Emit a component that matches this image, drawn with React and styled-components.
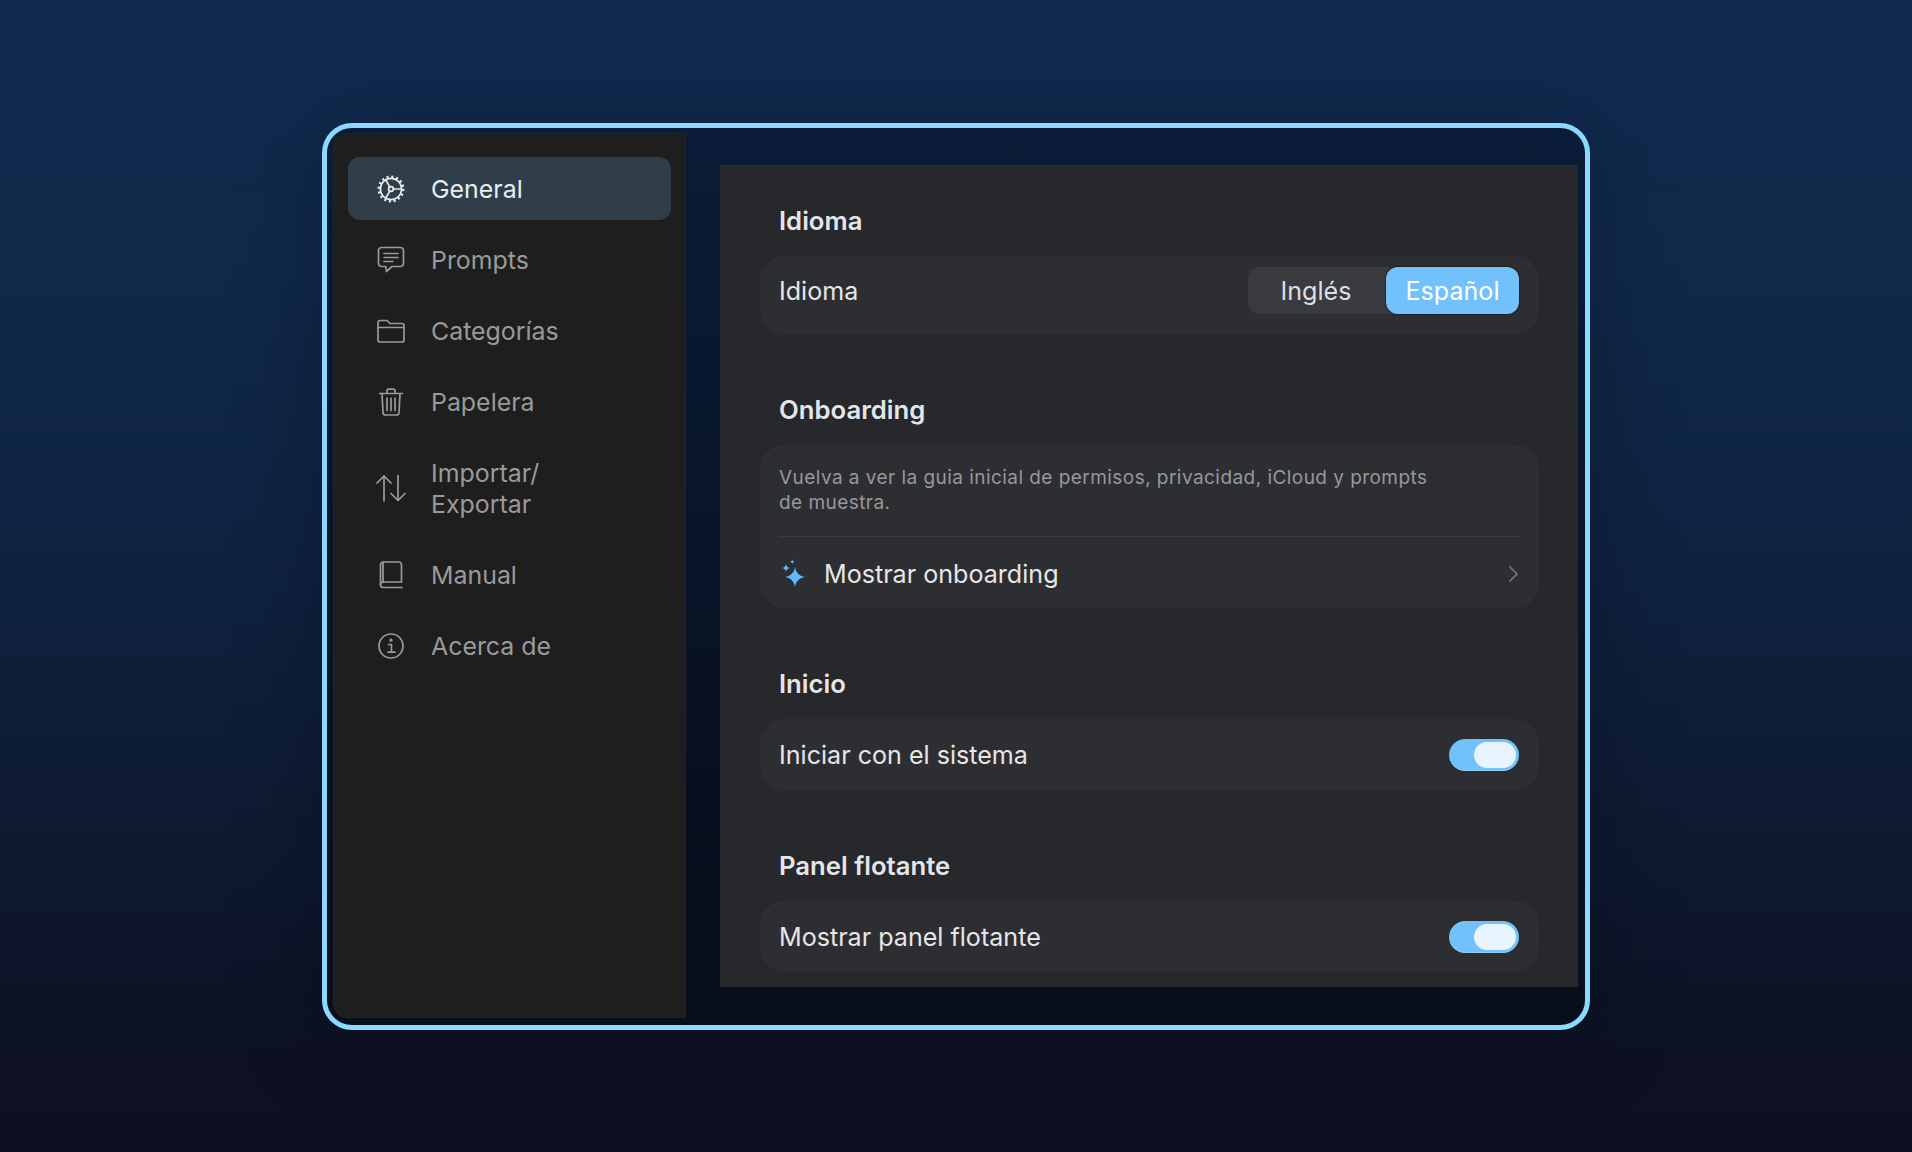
import React from "react";
import styled, { createGlobalStyle } from "styled-components";

const Global = createGlobalStyle`
  html, body { margin: 0; padding: 0; }
  body { font-family: Inter, "Noto Sans", sans-serif; -webkit-font-smoothing: antialiased; }
`;

const Page = styled.div`
  box-sizing: border-box;
  height: 1152px;
  padding-top: 123px;
  display: flex;
  justify-content: center;
  align-items: flex-start;
  overflow: hidden;
  background: linear-gradient(180deg, #102a50 0%, #11294a 22%, #0f2341 48%, #0e1b32 70%, #0d1225 90%, #0d1020 100%);
`;

const Frame = styled.div`
  box-sizing: border-box;
  width: 1268px;
  height: 907px;
  border: 5px solid #8cd9ff;
  border-radius: 30px;
  padding: 5px 7px 7px 6px;
  display: flex;
  background: linear-gradient(180deg, #0a1c37 0%, #09162b 40%, #070e1c 85%, #080e1c 100%);
  box-shadow: 0 10px 90px rgba(4, 8, 18, 0.28);
`;

const Sidebar = styled.nav`
  box-sizing: border-box;
  width: 353px;
  flex: none;
  padding: 24px 15px;
  background: #1e1e1e;
  border-radius: 14px 0 0 14px;
  box-shadow: inset 0 0 0 1px rgba(255, 255, 255, 0.025);
  display: flex;
  flex-direction: column;
  gap: 8px;
`;

const NavItem = styled.div`
  display: flex;
  align-items: center;
  gap: 26px;
  padding: 17px 15px 15px 29px;
  border-radius: 12px;
  font-size: 24.9px;
  line-height: 31px;
  font-weight: 400;
  color: ${(p) => (p.$active ? "#e8edf0" : "#999a9a")};
  background: ${(p) => (p.$active ? "#2f3e48" : "transparent")};
`;

const NavIcon = styled.svg`
  width: 28px;
  height: 28px;
  flex: none;
  margin-bottom: 2px;
  fill: none;
  stroke: currentColor;
  stroke-width: 1.7;
  stroke-linecap: round;
  stroke-linejoin: round;
`;

const WideNavIcon = styled(NavIcon)`
  width: 30px;
  margin: 0 -1px 2px;
`;

const NavLabel = styled.span`
  width: 150px;
`;

const Main = styled.main`
  box-sizing: border-box;
  flex: 1;
  margin: 32px 0 31px 34px;
  padding: 40.5px 39.5px 0;
  background: #26282c;
  box-shadow: inset 0 0 0 1px rgba(255, 255, 255, 0.012);
  display: flex;
  flex-direction: column;
  gap: 61px;
`;

const Section = styled.section`
  display: flex;
  flex-direction: column;
  gap: 20px;
`;

const Title = styled.h2`
  margin: 0;
  padding-left: 19.5px;
  font-size: 25.7px;
  line-height: 30px;
  font-weight: 600;
  color: #e4e5e6;
`;

const Card = styled.div`
  background: #2d2e32;
  border-radius: 24px;
  padding: 0 19.5px;
`;

const Row = styled.div`
  box-sizing: border-box;
  display: flex;
  align-items: center;
  justify-content: space-between;
  height: ${(p) => p.$h}px;
  padding: ${(p) => p.$pt || 0}px 0 ${(p) => p.$pb || 0}px;
  font-size: 25.1px;
  color: #e6e6e7;
`;

const Segments = styled.div`
  display: flex;
  width: 271px;
  height: 47px;
  border-radius: 12px;
  background: #3a3b3f;
`;

const Segment = styled.div`
  box-sizing: border-box;
  display: flex;
  align-items: center;
  justify-content: center;
  width: ${(p) => (p.$on ? 133 : 138)}px;
  padding-right: ${(p) => (p.$on ? 0 : 2)}px;
  border-radius: 12px;
  font-size: 25.1px;
  color: ${(p) => (p.$on ? "#ffffff" : "#dedee0")};
  background: ${(p) => (p.$on ? "#72c1fa" : "transparent")};
  box-shadow: ${(p) => (p.$on ? "0 0 1px 0.5px rgba(0, 0, 0, 0.3)" : "none")};
`;

const Description = styled.div`
  padding: 20px 0;
  border-bottom: 1.5px solid #3a3b3f;
`;

const DescriptionText = styled.p`
  margin: 0;
  max-width: 660px;
  font-size: 19px;
  line-height: 25.5px;
  letter-spacing: 0.45px;
  color: #97989a;
`;

const RowLead = styled.div`
  display: flex;
  align-items: center;
  gap: 19px;
`;

const Toggle = styled.div`
  box-sizing: border-box;
  display: flex;
  justify-content: flex-end;
  align-items: center;
  width: 70px;
  height: 32px;
  padding-right: 3px;
  border-radius: 16px;
  background: #72c1fa;
  box-shadow: inset 0 -1px 0 rgba(255, 255, 255, 0.25), 0 0 1px rgba(0, 0, 0, 0.6);
`;

const Knob = styled.div`
  width: 42px;
  height: 26px;
  border-radius: 13px;
  background: #e8f5fe;
`;

const Gear = () => (
  <NavIcon viewBox="0 0 28 28">
    <circle cx="14" cy="14" r="10.6" />
    <circle cx="14" cy="14" r="12.2" strokeWidth="2.6" strokeDasharray="2 2.79" strokeLinecap="butt" />
    <circle cx="14" cy="14" r="2.4" />
    <path d="M16.4 14H24.4M12.8 11.9 8.8 5M12.8 16.1 8.8 23" />
  </NavIcon>
);
const Bubble = () => (
  <NavIcon viewBox="0 0 28 28">
    <path d="M4.5 1.5H23.5A3 3 0 0 1 26.5 4.5V17.5A3 3 0 0 1 23.5 20.5H15L9.5 25.5L8.8 20.5H4.5A3 3 0 0 1 1.5 17.5V4.5A3 3 0 0 1 4.5 1.5Z" />
    <path d="M7 7.5H21M7 11.5H21M7 15.5H16" />
  </NavIcon>
);
const Folder = () => (
  <NavIcon viewBox="0 0 28 28">
    <path d="M1 5.5A2 2 0 0 1 3 3.5H10L13 6.5H25A2 2 0 0 1 27 8.5V23A2 2 0 0 1 25 25H3A2 2 0 0 1 1 23Z" />
    <path d="M1 10.5H27" />
  </NavIcon>
);
const Trash = () => (
  <NavIcon viewBox="0 0 28 28">
    <path d="M2.5 5.5H25.5M10 5.5V3A1.8 1.8 0 0 1 11.8 1.2H16.2A1.8 1.8 0 0 1 18 3V5.5" />
    <path d="M5 5.5L6 24.5A2.5 2.5 0 0 0 8.5 27H19.5A2.5 2.5 0 0 0 22 24.5L23 5.5" />
    <path d="M10 10V22.5M14 10V22.5M18 10V22.5" />
  </NavIcon>
);
const Arrows = () => (
  <WideNavIcon viewBox="0 0 30 28">
    <path d="M8 27V2M1 9L8 2L15 9M22 1.5V26.5M15 19.5L22 26.5L29 19.5" />
  </WideNavIcon>
);
const Book = () => (
  <NavIcon viewBox="0 0 28 28">
    <path d="M6 21.5V1H21.5A3 3 0 0 1 24.5 4V21H6A2.8 2.8 0 0 0 3.5 23.5A2.8 2.8 0 0 0 6 26.5H25" />
    <path d="M3.5 23.5V4A3 3 0 0 1 6.5 1" />
  </NavIcon>
);
const Info = () => (
  <NavIcon viewBox="0 0 28 28">
    <circle cx="14" cy="14" r="12" />
    <path d="M11.5 12.5H14.5V20M11 20.2H18" />
    <circle cx="14" cy="8.2" r="0.8" fill="currentColor" />
  </NavIcon>
);
const Sparkles = () => (
  <svg width="26" height="30" viewBox="0 0 26 30" fill="#5fb9f8">
    <path d="M16 8C17 13.5 19.7 16.8 26 18C19.7 19.2 17 22.5 16 28C15 22.5 12.3 19.2 6 18C12.3 16.8 15 13.5 16 8Z" />
    <path d="M7 5C7.3 7.2 8.4 8.4 11 9C8.4 9.6 7.3 10.8 7 13C6.7 10.8 5.6 9.6 3 9C5.6 8.4 6.7 7.2 7 5Z" />
    <path d="M13.3 .2C13.5 1.7 14.2 2.4 15.8 2.7C14.2 3 13.5 3.7 13.3 5.2C13.1 3.7 12.4 3 10.8 2.7C12.4 2.4 13.1 1.7 13.3 .2Z" />
  </svg>
);
const Chevron = () => (
  <svg width="12" height="18" viewBox="0 0 12 18" fill="none" stroke="#6d6e71" strokeWidth="1.8" strokeLinecap="round" strokeLinejoin="round">
    <path d="M3 2L10 9L3 16" />
  </svg>
);

const NAV = [
  ["General", Gear, true],
  ["Prompts", Bubble],
  ["Categorías", Folder],
  ["Papelera", Trash],
  ["Importar/ Exportar", Arrows],
  ["Manual", Book],
  ["Acerca de", Info],
];

export default function App() {
  return (
    <Page>
      <Global />
      <Frame>
        <Sidebar>
          {NAV.map(([label, Icon, active]) => (
            <NavItem key={label} $active={active}>
              <Icon />
              <NavLabel>{label}</NavLabel>
            </NavItem>
          ))}
        </Sidebar>
        <Main>
          <Section>
            <Title>Idioma</Title>
            <Card>
              <Row $h={78} $pb={8}>
                Idioma
                <Segments>
                  <Segment>Inglés</Segment>
                  <Segment $on>Español</Segment>
                </Segments>
              </Row>
            </Card>
          </Section>
          <Section>
            <Title>Onboarding</Title>
            <Card>
              <Description>
                <DescriptionText>
                  Vuelva a ver la guia inicial de permisos, privacidad, iCloud y prompts de muestra.
                </DescriptionText>
              </Description>
              <Row $h={71.5} $pt={3}>
                <RowLead>
                  <Sparkles />
                  Mostrar onboarding
                </RowLead>
                <Chevron />
              </Row>
            </Card>
          </Section>
          <Section>
            <Title>Inicio</Title>
            <Card>
              <Row $h={71}>
                Iniciar con el sistema
                <Toggle><Knob /></Toggle>
              </Row>
            </Card>
          </Section>
          <Section>
            <Title>Panel flotante</Title>
            <Card>
              <Row $h={71}>
                Mostrar panel flotante
                <Toggle><Knob /></Toggle>
              </Row>
            </Card>
          </Section>
        </Main>
      </Frame>
    </Page>
  );
}
